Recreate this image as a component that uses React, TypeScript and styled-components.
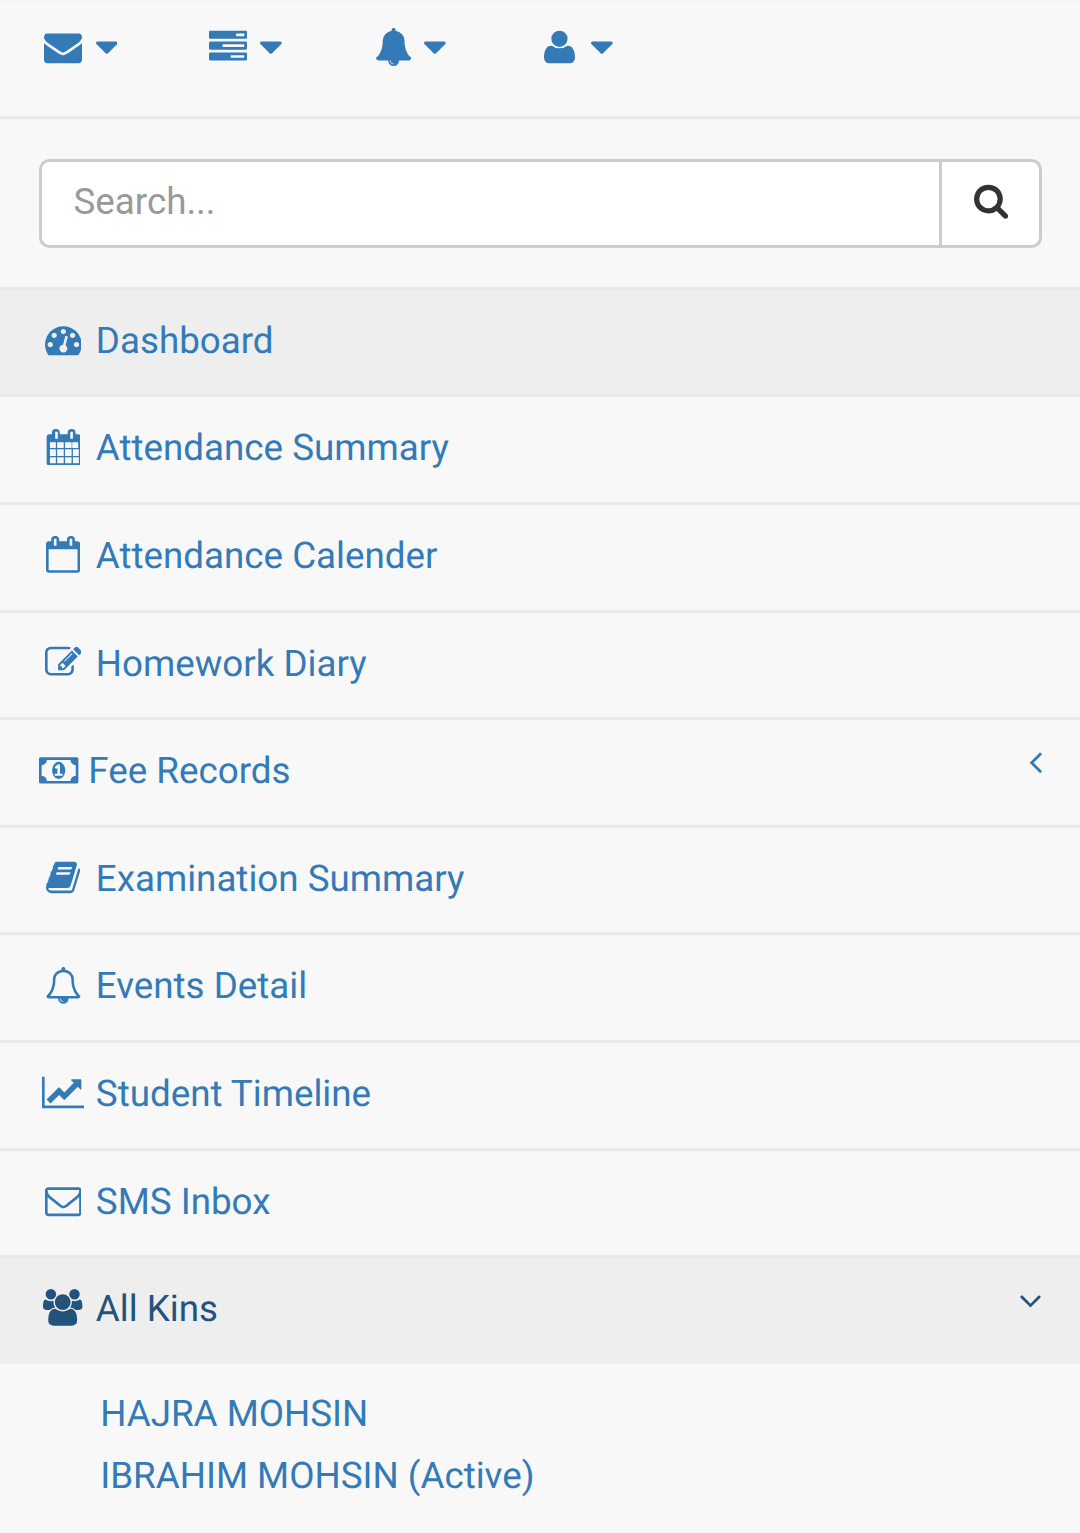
import React from "react";
import styled, { createGlobalStyle } from "styled-components";

const GlobalStyle = createGlobalStyle`
  html, body { margin: 0; padding: 0; background: #f8f8f8; }
  body {
    font-family: Roboto, "Liberation Sans", Arial, sans-serif;
    overflow: hidden;
    text-rendering: geometricPrecision;
    -webkit-font-smoothing: antialiased;
  }
  * { box-sizing: border-box; }
`;

type IconDef = { vb: string; d: string };

const I: Record<string, IconDef> = {
  envelope: { vb: "0 0 1792 1792", d: "M1792 710v794q0 66-47 113t-113 47h-1472q-66 0-113-47t-47-113v-794q44 49 101 87 362 246 497 345 57 42 92.5 65.5t94.5 48 110 24.5h2q51 0 110-24.5t94.5-48 92.5-65.5q170-123 498-345 57-39 100-87zm0-294q0 79-49 151t-122 123q-376 261-468 325-10 7-42.5 30.5t-54 38-52 32.5-57.5 27-50 9h-2q-23 0-50-9t-57.5-27-52-32.5-54-38-42.5-30.5q-91-64-262-182.5t-205-142.5q-62-42-117-115.5t-55-136.5q0-78 41.5-130t118.5-52h1472q65 0 112.5 47t47.5 113z" },
  tasks: { vb: "0 0 1792 1792", d: "M1024 1408h640v-128h-640v128zm-384-512h1024v-128h-1024v128zm640-512h384v-128h-384v128zm512 832v256q0 26-19 45t-45 19h-1664q-26 0-45-19t-19-45v-256q0-26 19-45t45-19h1664q26 0 45 19t19 45zm0-512v256q0 26-19 45t-45 19h-1664q-26 0-45-19t-19-45v-256q0-26 19-45t45-19h1664q26 0 45 19t19 45zm0-512v256q0 26-19 45t-45 19h-1664q-26 0-45-19t-19-45v-256q0-26 19-45t45-19h1664q26 0 45 19t19 45z" },
  bell: { vb: "64 0 1664 1792", d: "M912 1696q0-16-16-16-59 0-101.5-42.5t-42.5-101.5q0-16-16-16t-16 16q0 73 51.5 124.5t124.5 51.5q16 0 16-16zm816-288q0 52-38 90t-90 38h-448q0 106-75 181t-181 75-181-75-75-181h-448q-52 0-90-38t-38-90q50-42 91-88t85-119.5 74.5-158.5 50-206 19.5-260q0-152 117-282.5t307-158.5q-8-19-8-39 0-40 28-68t68-28 68 28 28 68q0 20-8 39 190 28 307 158.5t117 282.5q0 139 19.5 260t50 206 74.5 158.5 85 119.5 91 88z" },
  user: { vb: "166 0 1600 1792", d: "M1626 1399q0 109-71 187t-172 78h-974q-101 0-172-78t-71-187q0-85 9.5-160.5t36-152 66.5-131 107-89 153-34.5q149 128 358 128t358-128q87 0 153 34.5t107 89 66.5 131 36 152 9.5 160.5zm-346-887q0 159-112.5 271.5t-271.5 112.5-271.5-112.5-112.5-271.5 112.5-271.5 271.5-112.5 271.5 112.5 112.5 271.5z" },
  caret: { vb: "384 0 1024 1792", d: "M1408 704q0 26-19 45l-448 448q-19 19-45 19t-45-19l-448-448q-19-19-19-45t19-45 45-19h896q26 0 45 19t19 45z" },
  search: { vb: "64 0 1664 1792", d: "M1216 832q0-185-131.5-316.5t-316.5-131.5-316.5 131.5-131.5 316.5 131.5 316.5 316.5 131.5 316.5-131.5 131.5-316.5zm512 832q0 52-38 90t-90 38q-54 0-90-38l-343-342q-179 124-399 124-143 0-273.5-55.5t-225-150-150-225-55.5-273.5 55.5-273.5 150-225 225-150 273.5-55.5 273.5 55.5 225 150 150 225 55.5 273.5q0 220-124 399l343 343q37 37 37 90z" },
  dashboard: { vb: "0 0 1792 1792", d: "M384 1152q0-53-37.5-90.5t-90.5-37.5-90.5 37.5-37.5 90.5 37.5 90.5 90.5 37.5 90.5-37.5 37.5-90.5zm192-448q0-53-37.5-90.5t-90.5-37.5-90.5 37.5-37.5 90.5 37.5 90.5 90.5 37.5 90.5-37.5 37.5-90.5zm428 481l101-382q6-26-7.5-48.5t-38.5-29.5-48 6.5-30 39.5l-101 382q-60 5-107 43.5t-63 98.5q-20 77 20 146t117 89 146-20 89-117q16-60-6-117t-72-91zm660-33q0-53-37.5-90.5t-90.5-37.5-90.5 37.5-37.5 90.5 37.5 90.5 90.5 37.5 90.5-37.5 37.5-90.5zm-640-640q0-53-37.5-90.5t-90.5-37.5-90.5 37.5-37.5 90.5 37.5 90.5 90.5 37.5 90.5-37.5 37.5-90.5zm448 192q0-53-37.5-90.5t-90.5-37.5-90.5 37.5-37.5 90.5 37.5 90.5 90.5 37.5 90.5-37.5 37.5-90.5zm320 448q0 261-141 483-19 29-54 29h-1402q-35 0-54-29-141-221-141-483 0-182 71-348t191-286 286-191 348-71 348 71 286 191 191 286 71 348z" },
  calendar: { vb: "0 0 1664 1792", d: "M192 1664h288v-288h-288v288zm352 0h320v-288h-320v288zm-352-352h288v-320h-288v320zm352 0h320v-320h-320v320zm-352-384h288v-288h-288v288zm736 736h320v-288h-320v288zm-384-736h320v-288h-320v288zm768 736h288v-288h-288v288zm-384-352h320v-320h-320v320zm-352-864v-288q0-13-9.5-22.5t-22.5-9.5h-64q-13 0-22.5 9.5t-9.5 22.5v288q0 13 9.5 22.5t22.5 9.5h64q13 0 22.5-9.5t9.5-22.5zm736 864h288v-320h-288v320zm-384-384h320v-288h-320v288zm352 0h288v-288h-288v288zm32-480v-288q0-13-9.5-22.5t-22.5-9.5h-64q-13 0-22.5 9.5t-9.5 22.5v288q0 13 9.5 22.5t22.5 9.5h64q13 0 22.5-9.5t9.5-22.5zm384-64v1280q0 52-38 90t-90 38h-1408q-52 0-90-38t-38-90v-1280q0-52 38-90t90-38h128v-96q0-66 47-113t113-47h64q66 0 113 47t47 113v96h384v-96q0-66 47-113t113-47h64q66 0 113 47t47 113v96h128q52 0 90 38t38 90z" },
  calendarO: { vb: "0 0 1664 1792", d: "M128 1664h1408v-1024h-1408v1024zm384-1216v-288q0-14-9-23t-23-9h-64q-14 0-23 9t-9 23v288q0 14 9 23t23 9h64q14 0 23-9t9-23zm768 0v-288q0-14-9-23t-23-9h-64q-14 0-23 9t-9 23v288q0 14 9 23t23 9h64q14 0 23-9t9-23zm384-64v1280q0 52-38 90t-90 38h-1408q-52 0-90-38t-38-90v-1280q0-52 38-90t90-38h128v-96q0-66 47-113t113-47h64q66 0 113 47t47 113v96h384v-96q0-66 47-113t113-47h64q66 0 113 47t47 113v96h128q52 0 90 38t38 90z" },
  edit: { vb: "0 0 1792 1792", d: "M888 1184l116-116-152-152-116 116v56h96v96h56zm440-720q-16-16-33 1l-350 350q-17 17-1 33t33-1l350-350q17-17 1-33zm80 594v190q0 119-84.5 203.5t-203.5 84.5h-832q-119 0-203.5-84.5t-84.5-203.5v-832q0-119 84.5-203.5t203.5-84.5h832q63 0 117 25 15 7 18 23 3 17-9 29l-49 49q-14 14-32 8-23-6-45-6h-832q-66 0-113 47t-47 113v832q0 66 47 113t113 47h832q66 0 113-47t47-113v-126q0-13 9-22l64-64q15-15 35-7t20 29zm-96-738l288 288-672 672h-288v-288zm444 132l-92 92-288-288 92-92q28-28 68-28t68 28l152 152q28 28 28 68t-28 68z" },
  money: { vb: "0 0 1920 1792", d: "M768 1152h384v-96h-128v-448h-114l-148 137 77 80q42-37 55-57h2v288h-128v96zm512-256q0 70-21 142t-59.5 134-101.5 101-138 39-138-39-101.5-101-59.5-134-21-142 21-142 59.5-134 101.5-101 138-39 138 39 101.5 101 59.5 134 21 142zm512 256v-512q-106 0-181-75t-75-181h-1152q0 106-75 181t-181 75v512q106 0 181 75t75 181h1152q0-106 75-181t181-75zm128-832v1152q0 26-19 45t-45 19h-1792q-26 0-45-19t-19-45v-1152q0-26 19-45t45-19h1792q26 0 45 19t19 45z" },
  book: { vb: "0 0 1664 1792", d: "M1639 478q40 57 18 129l-275 906q-19 64-76.5 107.5t-122.5 43.5h-923q-77 0-148.5-53.5t-99.5-131.5q-24-67-2-127 0-4 3-27t4-37q1-8-3-21.5t-3-19.5q2-11 8-21t16.5-23.5 16.5-23.5q23-38 45-91.5t30-91.5q3-10 .5-30t-.5-28q3-11 17-28t17-23q21-36 42-92t25-90q1-9-2.5-32t.5-28q4-13 22-30.5t22-22.5q19-26 42.5-84.5t27.5-96.5q1-8-3-25.5t-2-26.5q2-8 9-18t18-23 17-21q8-12 16.5-30.5t15-35 16-36 19.5-32 26.5-23.5 36-11.5 47.5 5.5l-1 3q38-9 51-9h761q74 0 114 56t18 130l-274 906q-36 119-71.5 153.5t-128.5 34.5h-869q-27 0-38 15-11 16-1 43 24 70 144 70h923q29 0 56-15.5t35-41.5l300-987q7-22 5-57 38 15 59 43zm-1064 2q-4 13 2 22.5t20 9.5h608q13 0 25.5-9.5t16.5-22.5l21-64q4-13-2-22.5t-20-9.5h-608q-13 0-25.5 9.5t-16.5 22.5zm-83 256q-4 13 2 22.5t20 9.5h608q13 0 25.5-9.5t16.5-22.5l21-64q4-13-2-22.5t-20-9.5h-608q-13 0-25.5 9.5t-16.5 22.5z" },
  bellO: { vb: "0 0 1792 1792", d: "M912 1696q0-16-16-16-59 0-101.5-42.5t-42.5-101.5q0-16-16-16t-16 16q0 73 51.5 124.5t124.5 51.5q16 0 16-16zm-666-288h1300q-266-300-266-832 0-51-24-105t-69-103-121.5-80.5-169.5-31.5-169.5 31.5-121.5 80.5-69 103-24 105q0 532-266 832zm1482 0q0 52-38 90t-90 38h-448q0 106-75 181t-181 75-181-75-75-181h-448q-52 0-90-38t-38-90q50-42 91-88t85-119.5 74.5-158.5 50-206 19.5-260q0-152 117-282.5t307-158.5q-8-19-8-39 0-40 28-68t68-28 68 28 28 68q0 20-8 39 190 28 307 158.5t117 282.5q0 139 19.5 260t50 206 74.5 158.5 85 119.5 91 88z" },
  lineChart: { vb: "0 0 2048 1792", d: "M2048 1536v128h-2048v-1536h128v1408h1920zm-128-1248v435q0 21-19.5 29.5t-35.5-7.5l-121-121-633 633q-10 10-23 10t-23-10l-233-233-416 416-192-192 585-585q10-10 23-10t23 10l233 233 464-464-121-121q-16-16-7.5-35.5t29.5-19.5h435q14 0 23 9t9 23z" },
  envelopeO: { vb: "0 0 1792 1792", d: "M1664 1504v-768q-32 36-69 66-268 206-426 338-51 43-83 67t-86.5 48.5-102.5 24.5h-2q-48 0-102.5-24.5t-86.5-48.5-83-67q-158-132-426-338-37-30-69-66v768q0 13 9.5 22.5t22.5 9.5h1472q13 0 22.5-9.5t9.5-22.5zm0-1051v-24.5l-.5-13-3-12.5-5.5-9-9-7.5-14-2.5h-1472q-13 0-22.5 9.5t-9.5 22.5q0 168 147 284 193 152 401 317 6 5 35 29.5t46 37.5 44.5 31.5 50.5 27.5 43 9h2q20 0 43-9t50.5-27.5 44.5-31.5 46-37.5 35-29.5q208-165 401-317 54-43 100.5-115.5t46.5-131.5zm128-37v1088q0 66-47 113t-113 47h-1472q-66 0-113-47t-47-113v-1088q0-66 47-113t113-47h1472q66 0 113 47t47 113z" },
  users: { vb: "0 0 1920 1792", d: "M593 896q-162 5-265 128h-134q-82 0-138-40.5t-56-118.5q0-353 124-353 6 0 43.5 21t97.5 42.5 119 21.5q67 0 133-23-5 37-5 66 0 139 81 256zm1071 637q0 120-73 189.5t-194 69.5h-874q-121 0-194-69.5t-73-189.5q0-53 3.5-103.5t14-109 26.5-108.5 43-97.5 62-81 85.5-53.5 111.5-20q10 0 43 21.5t73 48 107 48 135 21.5 135-21.5 107-48 73-48 43-21.5q61 0 111.5 20t85.5 53.5 62 81 43 97.5 26.5 108.5 14 109 3.5 103.5zm-1024-1277q0 106-75 181t-181 75-181-75-75-181 75-181 181-75 181 75 75 181zm704 384q0 159-112.5 271.5t-271.5 112.5-271.5-112.5-112.5-271.5 112.5-271.5 271.5-112.5 271.5 112.5 112.5 271.5zm576 225q0 78-56 118.5t-138 40.5h-134q-103-123-265-128 81-117 81-256 0-29-5-66 66 23 133 23 59 0 119-21.5t97.5-42.5 43.5-21q124 0 124 353zm-128-609q0 106-75 181t-181 75-181-75-75-181 75-181 181-75 181 75 75 181z" },
  angleLeft: { vb: "576 0 640 1792", d: "M1203 544q0 13-10 23l-393 393 393 393q10 10 10 23t-10 23l-50 50q-10 10-23 10t-23-10l-466-466q-10-10-10-23t10-23l466-466q10-10 23-10t23 10l50 50q10 10 10 23z" },
  angleDown: { vb: "384 0 1024 1792", d: "M1395 736q0 13-10 23l-466 466q-10 10-23 10t-23-10l-466-466q-10-10-10-23t10-23l50-50q10-10 23-10t23 10l393 393 393-393q10-10 23-10t23 10l50 50q10 10 10 23z" },
};

const Svg = styled.svg`
  display: block;
  flex: none;
  height: 36.75px;
  width: auto;
  fill: currentColor;
`;

const Fa = ({ name }: { name: string }) => (
  <Svg viewBox={I[name].vb} xmlns="http://www.w3.org/2000/svg" aria-hidden="true">
    <path d={I[name].d} />
  </Svg>
);

const Page = styled.div`
  width: 1080px;
  height: 1533px;
  overflow: hidden;
  background: #f8f8f8;
  color: #337ab7;
  font-size: 36.75px;
  line-height: 52.5px;
`;

const TopBar = styled.div`
  display: flex;
  align-items: center;
  height: 119.4px;
  padding: 0 0 23px 44px;
  border-top: 1.5px solid #f3f3f3;
  border-bottom: 3px solid #e9e9e9;
`;

const TopItem = styled.a<{ $trail: number }>`
  display: flex;
  align-items: center;
  gap: 13.5px;
  margin-right: ${(p) => p.$trail}px;
  color: #337ab7;
  ${Svg} { height: 38px; }
`;

const SearchBlock = styled.div`
  padding: 39.375px 38.5px 38.7px;
  border-bottom: 3px solid #e9e9e9;
`;

const SearchGroup = styled.div`
  display: flex;
  height: 89.2px;
  background: #fff;
  border: 3px solid #ccc;
  border-radius: 10.5px;
`;

const SearchInput = styled.input`
  flex: 1;
  min-width: 0;
  border: 0;
  outline: 0;
  padding: 0 31.5px 2px 32px;
  background: transparent;
  font: inherit;
  font-size: 36.75px;
  color: #555;
  border-radius: 10.5px 0 0 10.5px;
  &::placeholder { color: #999; opacity: 1; }
`;

const SearchButton = styled.button`
  flex: none;
  width: 100px;
  display: flex;
  align-items: center;
  justify-content: center;
  padding: 0 0 6px 2px;
  border: 0;
  border-left: 3px solid #ccc;
  background: transparent;
  color: #333;
`;

const Row = styled.a<{ $active?: boolean; $dark?: boolean; $flush?: boolean }>`
  display: flex;
  align-items: center;
  height: ${(p) => (p.$flush ? "105.4px" : "107.625px")};
  padding: 0 37px ${(p) => (p.$flush ? "4px" : "2px")} 39.375px;
  background: ${(p) => (p.$active ? "#eeeeee" : "transparent")};
  color: ${(p) => (p.$dark ? "#23527c" : "#337ab7")};
  border-bottom: ${(p) => (p.$flush ? "0" : "3px solid #e9e9e9")};
`;

const IconSlot = styled.span<{ $fixed?: boolean }>`
  flex: none;
  display: flex;
  justify-content: center;
  width: ${(p) => (p.$fixed ? "47.25px" : "auto")};
  margin-right: ${(p) => (p.$fixed ? "9.2px" : "9.6px")};
  padding-bottom: 3px;
`;

const Label = styled.span`
  flex: 1;
  white-space: nowrap;
`;

const Arrow = styled.span<{ $lift: number; $inset: number }>`
  flex: none;
  margin-top: -${(p) => p.$lift}px;
  margin-right: ${(p) => p.$inset}px;
`;

const SubList = styled.div`
  display: flex;
  flex-direction: column;
  gap: 9.6px;
  padding: 24.6px 0 0 100.2px;
`;

const SubLink = styled.a`
  display: block;
  color: #337ab7;
  white-space: nowrap;
`;

const topIcons = [
  { name: "envelope", trail: 91.3 },
  { name: "tasks", trail: 94 },
  { name: "bell", trail: 97.5 },
  { name: "user", trail: 0 },
];

const items: { label: string; icon: string; fixed?: boolean; active?: boolean; arrow?: boolean }[] = [
  { label: "Dashboard", icon: "dashboard", fixed: true, active: true },
  { label: "Attendance Summary", icon: "calendar", fixed: true },
  { label: "Attendance Calender", icon: "calendarO", fixed: true },
  { label: "Homework Diary", icon: "edit", fixed: true },
  { label: "Fee Records", icon: "money", arrow: true },
  { label: "Examination Summary", icon: "book", fixed: true },
  { label: "Events Detail", icon: "bellO", fixed: true },
  { label: "Student Timeline", icon: "lineChart", fixed: true },
  { label: "SMS Inbox", icon: "envelopeO", fixed: true },
];

export default function App() {
  return (
    <Page>
      <GlobalStyle />
      <TopBar>
        {topIcons.map((t) => (
          <TopItem key={t.name} $trail={t.trail}>
            <Fa name={t.name} />
            <Fa name="caret" />
          </TopItem>
        ))}
      </TopBar>
      <SearchBlock>
        <SearchGroup>
          <SearchInput placeholder="Search..." />
          <SearchButton>
            <Fa name="search" />
          </SearchButton>
        </SearchGroup>
      </SearchBlock>
      {items.map((it) => (
        <Row key={it.label} $active={it.active}>
          <IconSlot $fixed={it.fixed}>
            <Fa name={it.icon} />
          </IconSlot>
          <Label>{it.label}</Label>
          {it.arrow && (
            <Arrow $lift={20} $inset={1}>
              <Fa name="angleLeft" />
            </Arrow>
          )}
        </Row>
      ))}
      <Row $active $dark $flush>
        <IconSlot $fixed>
          <Fa name="users" />
        </IconSlot>
        <Label>All Kins</Label>
        <Arrow $lift={17} $inset={2}>
          <Fa name="angleDown" />
        </Arrow>
      </Row>
      <SubList>
        <SubLink>HAJRA MOHSIN</SubLink>
        <SubLink>IBRAHIM MOHSIN (Active)</SubLink>
      </SubList>
    </Page>
  );
}
